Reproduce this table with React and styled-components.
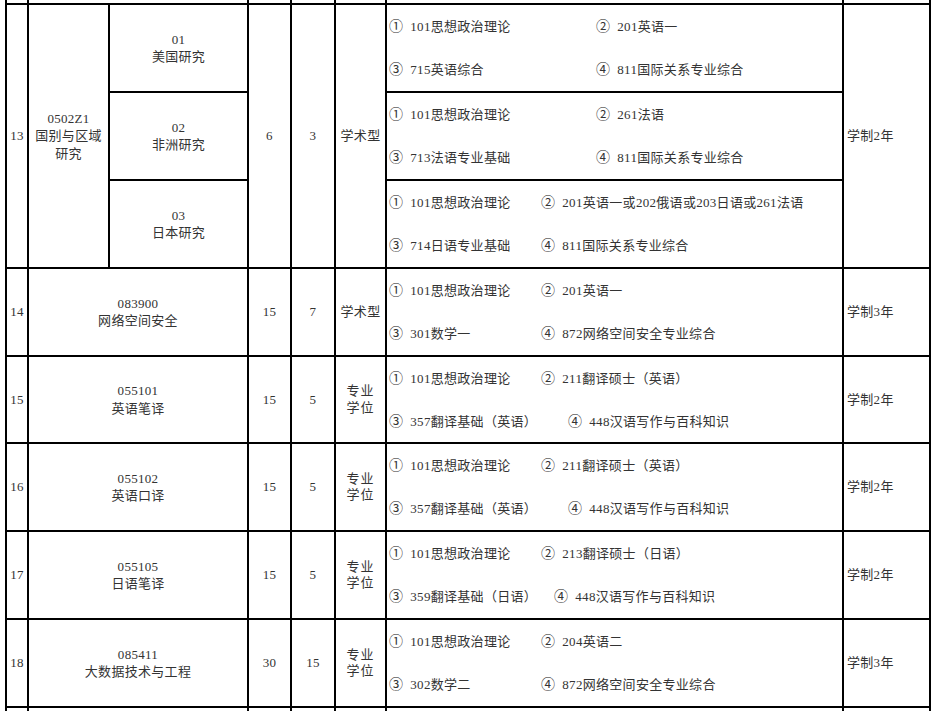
import React from "react";
import styled, { createGlobalStyle } from "styled-components";

const Global = createGlobalStyle`
  html, body { margin: 0; padding: 0; background: #fff; overflow: hidden; }
  body { font-family: "Liberation Serif", "Noto Sans CJK SC", serif; }
`;

const Sheet = styled.div`
  display: grid;
  grid-template-columns: 20px 79px 137px 41px 42px 49px 455px 85px;
  grid-template-rows: 3px repeat(4, 86px) 85px repeat(3, 86px) 20px;
  gap: 2px;
  padding: 0 2px;
  margin-left: 5px;
  width: max-content;
  background: #000;
`;

const Cell = styled.div`
  grid-row: span ${(p) => p.$rows || 1};
  grid-column: span ${(p) => p.$cols || 1};
  background: #fff;
  display: flex;
  flex-direction: column;
  justify-content: center;
  align-items: ${(p) => (p.$left ? "flex-start" : "center")};
  text-align: ${(p) => (p.$left ? "left" : "center")};
  padding-left: ${(p) => p.$pad || 0}px;
  font-size: 13px;
  line-height: 17.5px;
  letter-spacing: 0.3px;
  color: #333;
  min-width: 0;
  white-space: ${(p) => (p.$left ? "nowrap" : "normal")};
`;

const Block = styled.div`
  letter-spacing: ${(p) => (p.$wide ? "1px" : "inherit")};
  line-height: ${(p) => (p.$wide ? "16.5px" : "inherit")};
`;

const ExamLine = styled.div`
  height: 44px;
  display: flex;
  align-items: center;
  padding-top: 1px;
`;

const Item = styled.span`
  display: inline-flex;
  align-items: center;
  width: ${(p) => (p.$w ? `${p.$w}px` : "auto")};
  flex: none;
`;

const Mark = styled.span`
  margin-right: 7px;
  font-size: 14px;
`;

const MARKS = ["①", "②", "③", "④"];

function Exam({ lines }) {
  return (
    <Cell $left $pad={2}>
      {lines.map((ln, i) => (
        <ExamLine key={i}>
          <Item $w={ln.w}>
            <Mark>{MARKS[i * 2]}</Mark>
            {ln.a}
          </Item>
          <Item>
            <Mark>{MARKS[i * 2 + 1]}</Mark>
            {ln.b}
          </Item>
        </ExamLine>
      ))}
    </Cell>
  );
}

function Type({ lines }) {
  return (
    <Cell>
      {lines.map((t) => (
        <Block key={t} $wide={lines.length > 1}>
          {t}
        </Block>
      ))}
    </Cell>
  );
}

const EDGE = [1, 2, 1, 1, 1, 1, 1];

const subs = [
  {
    code: "01",
    name: "美国研究",
    exam: [
      { w: 207, a: "101思想政治理论", b: "201英语一" },
      { w: 207, a: "715英语综合", b: "811国际关系专业综合" },
    ],
  },
  {
    code: "02",
    name: "非洲研究",
    exam: [
      { w: 207, a: "101思想政治理论", b: "261法语" },
      { w: 207, a: "713法语专业基础", b: "811国际关系专业综合" },
    ],
  },
  {
    code: "03",
    name: "日本研究",
    exam: [
      { w: 152, a: "101思想政治理论", b: "201英语一或202俄语或203日语或261法语" },
      { w: 152, a: "714日语专业基础", b: "811国际关系专业综合" },
    ],
  },
];

const PRO = ["专业", "学位"];

const rows = [
  {
    no: "14",
    code: "083900",
    name: "网络空间安全",
    plan: "15",
    admit: "7",
    type: ["学术型"],
    years: "学制3年",
    exam: [
      { w: 152, a: "101思想政治理论", b: "201英语一" },
      { w: 152, a: "301数学一", b: "872网络空间安全专业综合" },
    ],
  },
  {
    no: "15",
    code: "055101",
    name: "英语笔译",
    plan: "15",
    admit: "5",
    type: PRO,
    years: "学制2年",
    exam: [
      { w: 152, a: "101思想政治理论", b: "211翻译硕士（英语）" },
      { w: 179, a: "357翻译基础（英语）", b: "448汉语写作与百科知识" },
    ],
  },
  {
    no: "16",
    code: "055102",
    name: "英语口译",
    plan: "15",
    admit: "5",
    type: PRO,
    years: "学制2年",
    exam: [
      { w: 152, a: "101思想政治理论", b: "211翻译硕士（英语）" },
      { w: 179, a: "357翻译基础（英语）", b: "448汉语写作与百科知识" },
    ],
  },
  {
    no: "17",
    code: "055105",
    name: "日语笔译",
    plan: "15",
    admit: "5",
    type: PRO,
    years: "学制2年",
    exam: [
      { w: 152, a: "101思想政治理论", b: "213翻译硕士（日语）" },
      { w: 165, a: "359翻译基础（日语）", b: "448汉语写作与百科知识" },
    ],
  },
  {
    no: "18",
    code: "085411",
    name: "大数据技术与工程",
    plan: "30",
    admit: "15",
    type: PRO,
    years: "学制3年",
    exam: [
      { w: 152, a: "101思想政治理论", b: "204英语二" },
      { w: 152, a: "302数学二", b: "872网络空间安全专业综合" },
    ],
  },
];

export default function App() {
  return (
    <>
      <Global />
      <Sheet>
        {EDGE.map((c, i) => (
          <Cell key={`t${i}`} $cols={c} />
        ))}

        <Cell $rows={3}>13</Cell>
        <Cell $rows={3}>
          <Block>0502Z1</Block>
          <Block>国别与区域研究</Block>
        </Cell>
        <Cell>
          <Block>{subs[0].code}</Block>
          <Block>{subs[0].name}</Block>
        </Cell>
        <Cell $rows={3}>6</Cell>
        <Cell $rows={3}>3</Cell>
        <Cell $rows={3}>学术型</Cell>
        <Exam lines={subs[0].exam} />
        <Cell $rows={3} $left $pad={3}>
          学制2年
        </Cell>
        {subs.slice(1).map((s) => (
          <React.Fragment key={s.code}>
            <Cell>
              <Block>{s.code}</Block>
              <Block>{s.name}</Block>
            </Cell>
            <Exam lines={s.exam} />
          </React.Fragment>
        ))}

        {rows.map((r) => (
          <React.Fragment key={r.no}>
            <Cell>{r.no}</Cell>
            <Cell $cols={2}>
              <Block>{r.code}</Block>
              <Block>{r.name}</Block>
            </Cell>
            <Cell>{r.plan}</Cell>
            <Cell>{r.admit}</Cell>
            <Type lines={r.type} />
            <Exam lines={r.exam} />
            <Cell $left $pad={3}>
              {r.years}
            </Cell>
          </React.Fragment>
        ))}

        {EDGE.map((c, i) => (
          <Cell key={`b${i}`} $cols={c} />
        ))}
      </Sheet>
    </>
  );
}
